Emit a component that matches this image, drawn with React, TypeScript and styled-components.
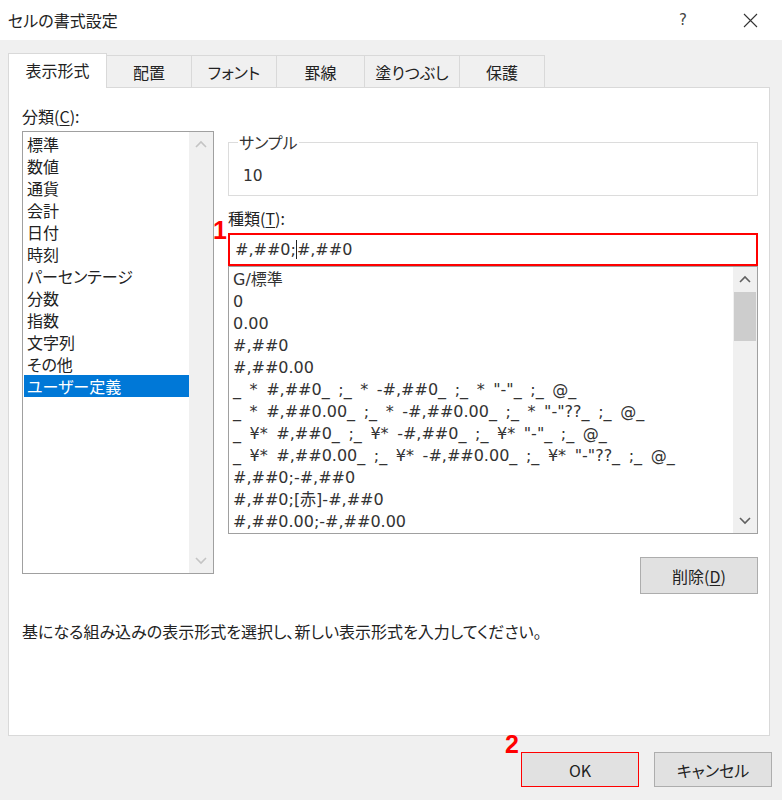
import React from "react";
import styled, { createGlobalStyle } from "styled-components";

const GlobalStyle = createGlobalStyle`
  html, body {
    margin: 0;
    padding: 0;
    background: #f0f0f0;
  }
  body {
    font-family: "Noto Sans CJK JP", sans-serif;
    font-feature-settings: "palt";
    color: #222;
  }
`;

const categories = [
  "標準",
  "数値",
  "通貨",
  "会計",
  "日付",
  "時刻",
  "パーセンテージ",
  "分数",
  "指数",
  "文字列",
  "その他",
  "ユーザー定義",
];

const formats = [
  "G/標準",
  "0",
  "0.00",
  "#,##0",
  "#,##0.00",
  '_ * #,##0_ ;_ * -#,##0_ ;_ * "-"_ ;_ @_',
  '_ * #,##0.00_ ;_ * -#,##0.00_ ;_ * "-"??_ ;_ @_',
  '_ ¥* #,##0_ ;_ ¥* -#,##0_ ;_ ¥* "-"_ ;_ @_',
  '_ ¥* #,##0.00_ ;_ ¥* -#,##0.00_ ;_ ¥* "-"??_ ;_ @_',
  "#,##0;-#,##0",
  "#,##0;[赤]-#,##0",
  "#,##0.00;-#,##0.00",
];

const tabs = [
  { label: "表示形式", w: 99 },
  { label: "配置", w: 86 },
  { label: "フォント", w: 86 },
  { label: "罫線", w: 89 },
  { label: "塗りつぶし", w: 96 },
  { label: "保護", w: 86 },
];

const Chevron = ({ up, color }: { up?: boolean; color: string }) => (
  <svg width="12" height="8" viewBox="0 0 12 8">
    <path
      d={up ? "M1 7 L6 2 L11 7" : "M1 1 L6 6 L11 1"}
      fill="none"
      stroke={color}
      strokeWidth="1.6"
    />
  </svg>
);

export default function App() {
  return (
    <>
      <GlobalStyle />
      <Dialog>
        <TitleBar>
          <Title>セルの書式設定</Title>
          <HelpMark>?</HelpMark>
          <CloseMark>
            <svg width="15" height="15" viewBox="0 0 15 15">
              <path d="M1 1 L14 14 M14 1 L1 14" stroke="#333" strokeWidth="1.1" />
            </svg>
          </CloseMark>
        </TitleBar>

        <TabRow>
          {tabs.map((t, i) => (
            <Tab key={t.label} $active={i === 0} $w={t.w}>
              {t.label}
            </Tab>
          ))}
        </TabRow>

        <Panel>
          <Columns>
            <LeftCol>
              <Label>
                分類(<u>C</u>):
              </Label>
              <CategoryBox>
                <Items>
                  {categories.map((c, i) => (
                    <CategoryItem key={c} $selected={i === categories.length - 1}>
                      {c}
                    </CategoryItem>
                  ))}
                </Items>
                <ScrollBar>
                  <ScrollArrow>
                    <Chevron up color="#c4c4c4" />
                  </ScrollArrow>
                  <ScrollTrack />
                  <ScrollArrow>
                    <Chevron color="#c4c4c4" />
                  </ScrollArrow>
                </ScrollBar>
              </CategoryBox>
            </LeftCol>

            <RightCol>
              <SampleGroup>
                <legend>サンプル</legend>
                <SampleValue>10</SampleValue>
              </SampleGroup>

              <TypeLabel>
                種類(<u>T</u>):
              </TypeLabel>
              <InputBox>
                <Marker $top={-17}>1</Marker>
                <Mono>#,##0;</Mono>
                <Caret />
                <Mono>#,##0</Mono>
              </InputBox>

              <FormatBox>
                <Items $pad={2}>
                  {formats.map((f) => (
                    <FormatItem key={f}>{f}</FormatItem>
                  ))}
                </Items>
                <ScrollBar>
                  <ScrollArrow>
                    <Chevron up color="#606060" />
                  </ScrollArrow>
                  <ScrollTrack>
                    <Thumb />
                  </ScrollTrack>
                  <ScrollArrow>
                    <Chevron color="#606060" />
                  </ScrollArrow>
                </ScrollBar>
              </FormatBox>

              <DeleteButton>
                削除(<u>D</u>)
              </DeleteButton>
            </RightCol>
          </Columns>

          <Description>
            基になる組み込みの表示形式を選択し、新しい表示形式を入力してください。
          </Description>
        </Panel>

        <Footer>
          <Button $highlight>
            <Marker $top={-21}>2</Marker>
            OK
          </Button>
          <Button>キャンセル</Button>
        </Footer>
      </Dialog>
    </>
  );
}

const Dialog = styled.div`
  display: flex;
  flex-direction: column;
  width: 782px;
  height: 800px;
  background: #f0f0f0;
`;

const TitleBar = styled.div`
  display: flex;
  align-items: center;
  height: 40px;
  padding: 0 17px 0 8px;
  background: #fff;
`;

const Title = styled.div`
  flex: 1;
  font-size: 16px;
  color: #222;
`;

const HelpMark = styled.div`
  width: 30px;
  text-align: center;
  font-family: "DejaVu Sans", sans-serif;
  font-size: 15px;
  color: #444;
`;

const CloseMark = styled.div`
  display: flex;
  justify-content: center;
  width: 30px;
  margin-left: 37px;
`;

const TabRow = styled.div`
  display: flex;
  align-items: flex-end;
  padding: 13px 0 0 8px;
  position: relative;
  z-index: 1;
`;

const Tab = styled.div<{ $active?: boolean; $w: number }>`
  box-sizing: border-box;
  display: flex;
  align-items: center;
  justify-content: center;
  width: ${(p) => p.$w}px;
  height: ${(p) => (p.$active ? 35 : 32)}px;
  margin-bottom: ${(p) => (p.$active ? -1 : 0)}px;
  margin-left: -1px;
  padding-bottom: ${(p) => (p.$active ? 3 : 0)}px;
  border: 1px solid #d9d9d9;
  border-bottom: none;
  background: ${(p) => (p.$active ? "#fff" : "#f0f0f0")};
  font-size: 16px;
  color: #222;

  &:first-child {
    margin-left: 0;
  }
`;

const Panel = styled.div`
  box-sizing: border-box;
  display: flex;
  flex-direction: column;
  width: 762px;
  height: 649px;
  margin-left: 8px;
  padding: 17px 11px 0 13px;
  background: #fff;
  border: 1px solid #d9d9d9;
`;

const Columns = styled.div`
  display: grid;
  grid-template-columns: 192px 1fr;
  column-gap: 14px;
  align-items: start;
`;

const LeftCol = styled.div`
  display: flex;
  flex-direction: column;
`;

const RightCol = styled.div`
  display: flex;
  flex-direction: column;
  padding-top: 27px;
`;

const Label = styled.div`
  height: 22px;
  line-height: 22px;
  font-size: 16px;
  margin-bottom: 4px;

  u {
    text-underline-offset: 2px;
  }
`;

const TypeLabel = styled(Label)`
  margin-top: 11px;
`;

const ListBox = styled.div`
  box-sizing: border-box;
  display: flex;
  border: 1px solid #a0a0a0;
  background: #fff;
  overflow: hidden;
`;

const CategoryBox = styled(ListBox)`
  height: 443px;
`;

const FormatBox = styled(ListBox)`
  height: 268px;
`;

const Items = styled.div<{ $pad?: number }>`
  flex: 1;
  padding: ${(p) => p.$pad ?? 1}px 0 0 1px;
  overflow: hidden;
`;

const CategoryItem = styled.div<{ $selected?: boolean }>`
  height: 22px;
  line-height: 22px;
  padding-left: 3px;
  font-size: 16px;
  color: ${(p) => (p.$selected ? "#fff" : "#222")};
  background: ${(p) => (p.$selected ? "#0078d7" : "transparent")};
`;

const FormatItem = styled.div`
  height: 22px;
  line-height: 22px;
  padding-left: 3px;
  font-family: "DejaVu Sans", "Noto Sans CJK JP", sans-serif;
  font-size: 16px;
  word-spacing: 3.5px;
  white-space: pre;
  color: #333;
`;

const ScrollBar = styled.div`
  display: flex;
  flex-direction: column;
  width: 24px;
  background: #f0f0f0;
`;

const ScrollArrow = styled.div`
  display: flex;
  align-items: center;
  justify-content: center;
  height: 24px;
`;

const ScrollTrack = styled.div`
  flex: 1;
`;

const Thumb = styled.div`
  height: 49px;
  margin: 1px 1px 0 1px;
  background: #cdcdcd;
`;

const SampleGroup = styled.fieldset`
  box-sizing: border-box;
  height: 64px;
  margin: 0;
  padding: 0 14px;
  border: 1px solid #dcdcdc;

  legend {
    margin-left: -5px;
    padding: 0 1px;
    font-size: 16px;
    line-height: 20px;
    color: #333;
  }
`;

const SampleValue = styled.div`
  margin-top: 14px;
  font-family: "DejaVu Sans", sans-serif;
  font-size: 15.5px;
  line-height: 20px;
  color: #333;
`;

const InputBox = styled.div`
  position: relative;
  box-sizing: border-box;
  display: flex;
  align-items: center;
  height: 33px;
  padding-left: 5px;
  border: 2px solid #f00;
`;

const Mono = styled.span`
  font-family: "DejaVu Sans", sans-serif;
  font-size: 16px;
  color: #333;
  white-space: pre;
`;

const Caret = styled.span`
  width: 1px;
  height: 19px;
  background: #222;
`;

const Marker = styled.span<{ $top: number }>`
  position: absolute;
  top: ${(p) => p.$top}px;
  right: calc(100% + 3px);
  font-family: "Liberation Sans", Arial, sans-serif;
  font-weight: 700;
  font-size: 25px;
  line-height: 25px;
  color: #f00;
`;

const Button = styled.div<{ $highlight?: boolean }>`
  position: relative;
  box-sizing: border-box;
  display: flex;
  align-items: center;
  justify-content: center;
  width: 118px;
  height: 35px;
  background: #e1e1e1;
  border: 1px solid ${(p) => (p.$highlight ? "#f00" : "#adadad")};
  font-size: 16px;
  color: #222;

  u {
    text-underline-offset: 2px;
  }
`;

const DeleteButton = styled(Button)`
  align-self: flex-end;
  height: 37px;
  margin-top: 23px;
`;

const Description = styled.div`
  margin-top: 27px;
  font-size: 16px;
  line-height: 20px;
  color: #222;
`;

const Footer = styled.div`
  display: flex;
  justify-content: flex-end;
  gap: 15px;
  padding: 16px 10px 0 0;
`;
